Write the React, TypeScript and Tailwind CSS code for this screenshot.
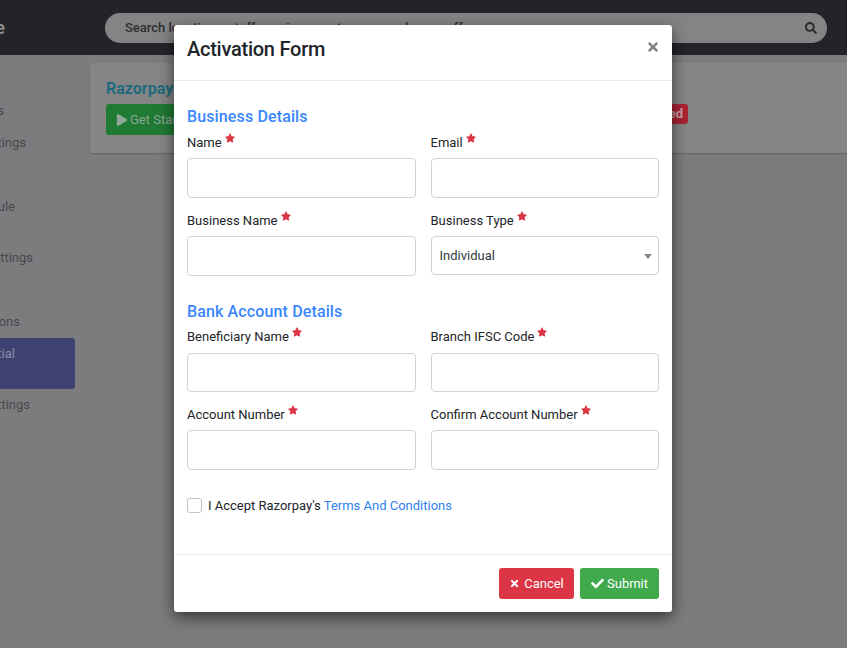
import { FaCheck, FaPlay, FaSearch, FaStar, FaTimes } from "react-icons/fa";

function Label({ text }: { text: string }) {
  return (
    <label className="flex h-[20px] items-center text-[13px] text-[#212529]">
      {text}
      <FaStar size={10} className="relative top-[-5px] ml-[3px] text-[#dc3545]" />
    </label>
  );
}

function Field({ label, inputClass = "mt-[5px] h-[40px]" }: { label: string; inputClass?: string }) {
  return (
    <div>
      <Label text={label} />
      <input className={`block w-full rounded-[4px] border border-[#ced4da] bg-white ${inputClass}`} />
    </div>
  );
}

export default function App() {
  return (
    <div className="relative h-[648px] w-[847px] overflow-hidden bg-[#7c7c7f] font-['Roboto',sans-serif]">
      {/* Page behind the dialog */}
      <div className="flex h-[55px] items-center bg-[#232429] pr-[20px]">
        <div className="flex w-[105px] shrink-0 justify-end overflow-hidden pr-[100px]">
          <div className="whitespace-nowrap text-[18px] font-bold text-[#8b8b8e]">Store</div>
        </div>
        <div className="mt-[1px] flex h-[30px] flex-1 items-center justify-between rounded-full bg-[#848484] pl-[20px] pr-[10px]">
          <span className="whitespace-nowrap text-[13px] font-medium text-[#2f2f31]">
            Search locations, staff, services, customers, packages, offers
          </span>
          <FaSearch size={12} className="text-[#2c2c2e]" />
        </div>
      </div>

      <div className="flex">
        <div className="w-[75px] shrink-0 overflow-hidden pt-[46px] text-[13px] text-[#48484b]">
          <div className="flex h-[20px] items-center justify-end whitespace-nowrap pr-[71px]">Apps</div>
          <div className="mt-[12px] flex h-[20px] items-center justify-end whitespace-nowrap pr-[49px]">Settings</div>
          <div className="mt-[44px] flex h-[20px] items-center justify-end whitespace-nowrap pr-[60px]">Module</div>
          <div className="mt-[31px] flex h-[20px] items-center justify-end whitespace-nowrap pr-[42px]">Settings</div>
          <div className="mt-[44px] flex h-[20px] items-center justify-end whitespace-nowrap pr-[55px]">Options</div>
          <div className="mt-[6px] h-[51px] rounded-r-[3px] bg-[#3d4270] pt-[6px]">
            <div className="flex h-[20px] items-center justify-end whitespace-nowrap pr-[60px] text-[#8e90a6]">Essential</div>
          </div>
          <div className="mt-[6px] flex h-[20px] items-center justify-end whitespace-nowrap pr-[45px]">Settings</div>
        </div>

        <div className="mt-[8px] ml-[15px] h-[90px] w-[780px] shrink-0 rounded-[3px] bg-[#858585] pl-[16px] pt-[15px] shadow-[0_1px_2px_rgba(0,0,0,0.2)]">
          <div className="text-[16px] leading-[22px] font-bold text-[#1f6b7e]">Razorpay</div>
          <div className="mt-[4px] flex w-[582px] items-start justify-between">
            <div className="flex h-[31px] w-[120px] items-center gap-[2px] rounded-[3px] bg-[#1f7a33] pl-[10px] text-[13px] text-[#8fa595]">
              <FaPlay size={12} />
              Get Started
            </div>
            <div className="flex h-[20px] items-center rounded-[3px] bg-[#a92232] px-[5px] text-[13px] font-bold text-[#c9a3a8]">
              Not Activated
            </div>
          </div>
        </div>
      </div>

      {/* Activation dialog */}
      <div className="absolute left-[174px] top-[25px] h-[587px] w-[498px] rounded-[3px] bg-white shadow-[0_5px_15px_rgba(0,0,0,0.6)]">
        <div className="flex h-[56px] items-start justify-between border-b border-[#e9ecef] pl-[13px] pr-[12px] pt-[11px]">
          <h1 className="text-[20px] leading-[26px] font-medium tracking-[-0.25px] text-[#212529]">Activation Form</h1>
          <FaTimes size={14} className="mt-[4px] text-[#848484]" />
        </div>

        <div className="h-[474px] border-b border-[#e9ecef] px-[13px] pt-[26px]">
          <h2 className="h-[20px] text-[16px] leading-[20px] font-medium tracking-[0.13px] text-[#3a86ff]">Business Details</h2>
          <div className="mt-[6px] grid grid-cols-2 gap-x-[15px] gap-y-[13px]">
            <Field label="Name" />
            <Field label="Email" />
            <Field label="Business Name" />
            <div>
              <Label text="Business Type" />
              <div className="relative mt-[5px]">
                <select defaultValue="Individual" className="block h-[39px] w-full appearance-none rounded-[4px] border border-[#ced4da] bg-white pl-[8px] text-[13px] text-[#343a40]">
                  <option>Individual</option>
                </select>
                <span className="absolute right-[7px] top-[18px] h-0 w-0 border-x-[4px] border-t-[5px] border-x-transparent border-t-[#888888]" />
              </div>
            </div>
          </div>

          <h2 className="mt-[26px] h-[20px] text-[16px] leading-[20px] font-medium tracking-[0.13px] text-[#3a86ff]">Bank Account Details</h2>
          <div className="mt-[5px] grid grid-cols-2 gap-x-[15px] gap-y-[13px]">
            <Field label="Beneficiary Name" inputClass="mt-[6px] h-[39px]" />
            <Field label="Branch IFSC Code" inputClass="mt-[6px] h-[39px]" />
            <Field label="Account Number" />
            <Field label="Confirm Account Number" />
          </div>

          <div className="mt-[26px] flex items-center gap-[6px] text-[13px] text-[#212529]">
            <input type="checkbox" className="h-[15px] w-[15px] appearance-none rounded-[3px] border border-[#c4c4c4] bg-white" />
            <span>
              I Accept Razorpay's <a className="text-[#2f80ed]">Terms And Conditions</a>
            </span>
          </div>
        </div>

        <div className="flex justify-end gap-[6px] pr-[13px] pt-[13px]">
          <button className="flex h-[31px] w-[75px] items-center justify-center gap-[4px] rounded-[3px] bg-[#dc3545] text-[13px] text-white">
            <FaTimes size={11} />
            Cancel
          </button>
          <button className="flex h-[31px] w-[79px] items-center justify-center gap-[3px] rounded-[3px] bg-[#3fa94b] text-[13px] text-white">
            <FaCheck size={13} />
            Submit
          </button>
        </div>
      </div>
    </div>
  );
}
